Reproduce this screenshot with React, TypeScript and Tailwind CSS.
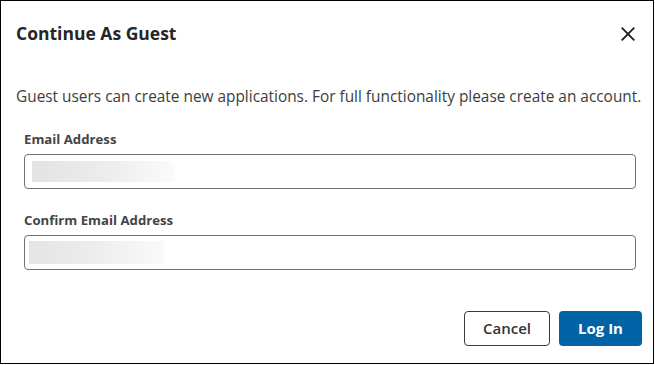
export default function App() {
  return (
    <div className="w-[655px] h-[365px] bg-white" style={{ fontFamily: '"Open Sans", "Liberation Sans", sans-serif' }}>
      <div className="w-[654px] h-[364px] border border-black flex flex-col">
        <div className="flex items-start justify-between pl-[15px] pr-[18px] pt-[20px]">
          <h1 className="text-[17.5px] leading-[24px] font-bold text-[#262626]">Continue As Guest</h1>
          <svg width="14" height="14" viewBox="0 0 14 14" className="mt-[6px]">
            <path d="M0.7 0.7 L13.3 13.3 M13.3 0.7 L0.7 13.3" stroke="#222" strokeWidth="1.9" fill="none" />
          </svg>
        </div>
        <p className="mt-[42px] pl-[15px] text-[15.4px] leading-[20px] text-[#3d3d3d] whitespace-nowrap">
          Guest users can create new applications. For full functionality please create an account.
        </p>
        <div className="pl-[23px] pr-[17px] mt-[23px] flex flex-col">
          <label className="text-[13.2px] leading-[18px] font-bold text-[#444]">Email Address</label>
          <div className="mt-[6px] h-[35px] border border-[#6e7177] rounded-[4px] flex items-center pl-[7px]">
            <div className="w-[143px] h-[21px] bg-gradient-to-r from-[#e2e3e5] via-[#ececed] to-[#fbfbfb]" />
          </div>
          <label className="mt-[22px] text-[13.2px] leading-[18px] font-bold text-[#444]">Confirm Email Address</label>
          <div className="mt-[6px] h-[35px] border border-[#6e7177] rounded-[4px] flex items-center pl-[4px]">
            <div className="w-[135px] h-[23px] bg-gradient-to-r from-[#e4e4e6] via-[#ededee] to-[#fafafa]" />
          </div>
        </div>
        <div className="mt-[41px] flex justify-end gap-[9px] pr-[11px]">
          <button className="w-[86px] h-[35px] border border-[#3a3a3a] rounded-[4px] text-[15px] font-semibold text-[#333] bg-white">
            Cancel
          </button>
          <button className="w-[83px] h-[35px] rounded-[4px] text-[15px] font-bold text-white bg-[#0063a6]">
            Log In
          </button>
        </div>
      </div>
    </div>
  );
}
